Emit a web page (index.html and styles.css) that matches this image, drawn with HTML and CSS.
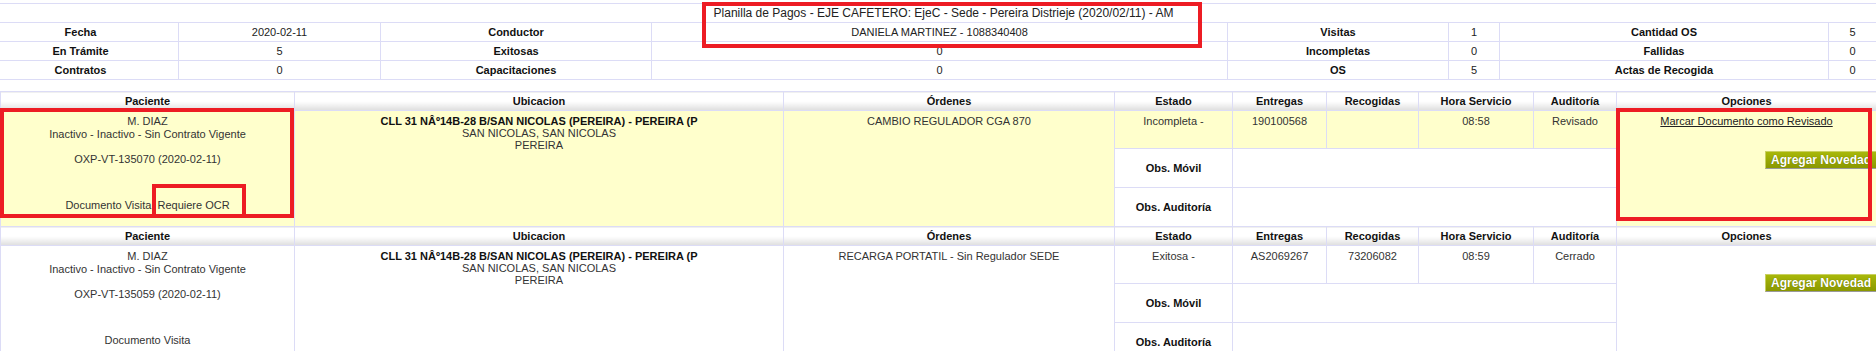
FILE: index.html
```html
<!DOCTYPE html>
<html>
<head>
  <meta charset="utf-8">
  <link rel="stylesheet" href="styles.css">
</head>
<body>
  <table class="resumen">
    <colgroup>
      <col style="width:196px"><col style="width:202px"><col style="width:271px"><col style="width:576px">
      <col style="width:221px"><col style="width:51px"><col style="width:329px"><col style="width:48px">
    </colgroup>
    <tr class="titulo">
      <td colspan="8">Planilla de Pagos - EJE CAFETERO: EjeC - Sede - Pereira Distrieje (2020/02/11) - AM</td>
    </tr>
    <tr>
      <th>Fecha</th><td>2020-02-11</td>
      <th>Conductor</th><td>DANIELA MARTINEZ - 1088340408</td>
      <th>Visitas</th><td>1</td>
      <th>Cantidad OS</th><td>5</td>
    </tr>
    <tr>
      <th>En Trámite</th><td>5</td>
      <th>Exitosas</th><td>0</td>
      <th>Incompletas</th><td>0</td>
      <th>Fallidas</th><td>0</td>
    </tr>
    <tr>
      <th>Contratos</th><td>0</td>
      <th>Capacitaciones</th><td>0</td>
      <th>OS</th><td>5</td>
      <th>Actas de Recogida</th><td>0</td>
    </tr>
  </table>

  <table class="visitas">
    <colgroup>
      <col style="width:294px"><col style="width:489px"><col style="width:331px"><col style="width:118px">
      <col style="width:94px"><col style="width:92px"><col style="width:115px"><col style="width:83px"><col style="width:260px">
    </colgroup>

    <tr class="cab">
      <th>Paciente</th><th>Ubicacion</th><th>Órdenes</th><th>Estado</th><th>Entregas</th>
      <th>Recogidas</th><th>Hora Servicio</th><th>Auditoría</th><th>Opciones</th>
    </tr>
    <tr class="fila1 pendiente">
      <td rowspan="3" class="paciente">
        M. DIAZ<br>Inactivo - Inactivo - Sin Contrato Vigente<br><br>OXP-VT-135070 (2020-02-11)
        <div class="doc">Documento Visita <span class="ocr">Requiere OCR</span></div>
      </td>
      <td rowspan="3" class="ubicacion"><b>CLL 31 NÂº14B-28 B/SAN NICOLAS (PEREIRA) - PEREIRA (P</b><br>SAN NICOLAS, SAN NICOLAS<br>PEREIRA</td>
      <td rowspan="3" class="ordenes">CAMBIO REGULADOR CGA 870</td>
      <td>Incompleta -</td>
      <td>190100568</td>
      <td></td>
      <td>08:58</td>
      <td>Revisado</td>
      <td rowspan="3" class="opciones">
        <a href="#">Marcar Documento como Revisado</a><br><br><br>
        <button class="btn-novedad">Agregar Novedad</button>
      </td>
    </tr>
    <tr class="obs">
      <th>Obs. Móvil</th><td colspan="4"></td>
    </tr>
    <tr class="obs">
      <th>Obs. Auditoría</th><td colspan="4"></td>
    </tr>

    <tr class="cab">
      <th>Paciente</th><th>Ubicacion</th><th>Órdenes</th><th>Estado</th><th>Entregas</th>
      <th>Recogidas</th><th>Hora Servicio</th><th>Auditoría</th><th>Opciones</th>
    </tr>
    <tr class="fila1">
      <td rowspan="3" class="paciente">
        M. DIAZ<br>Inactivo - Inactivo - Sin Contrato Vigente<br><br>OXP-VT-135059 (2020-02-11)
        <div class="doc">Documento Visita</div>
      </td>
      <td rowspan="3" class="ubicacion"><b>CLL 31 NÂº14B-28 B/SAN NICOLAS (PEREIRA) - PEREIRA (P</b><br>SAN NICOLAS, SAN NICOLAS<br>PEREIRA</td>
      <td rowspan="3" class="ordenes">RECARGA PORTATIL - Sin Regulador SEDE</td>
      <td>Exitosa -</td>
      <td>AS2069267</td>
      <td>73206082</td>
      <td>08:59</td>
      <td>Cerrado</td>
      <td rowspan="3" class="opciones">
        <br><br>
        <button class="btn-novedad">Agregar Novedad</button>
      </td>
    </tr>
    <tr class="obs">
      <th>Obs. Móvil</th><td colspan="4"></td>
    </tr>
    <tr class="obs">
      <th>Obs. Auditoría</th><td colspan="4"></td>
    </tr>
  </table>

  <!-- marcas rojas de revision -->
  <div class="marca marca-titulo"></div>
  <div class="marca marca-paciente"></div>
  <div class="marca marca-ocr"></div>
  <div class="marca marca-opciones"></div>
</body>
</html>
```

FILE: styles.css
```css
body {
  margin: 0;
  position: relative;
  font-family: "Liberation Sans", Arial, sans-serif;
  font-size: 11px;
  color: #222;
  background: #fff;
  overflow: hidden;
}

table {
  border-collapse: collapse;
  table-layout: fixed;
}

td, th {
  border: 1px solid #dcdcf6;
  padding: 0 2px;
  text-align: center;
  font-size: 11px;
}

th {
  font-weight: 700;
  color: #111;
}

.resumen {
  margin: 3px 0 0 -18px;
  width: calc(100% + 18px);
}

.resumen tr {
  height: 19px;
}

.resumen .titulo td {
  border-left: none;
  border-right: none;
  padding-left: 30px;
  font-size: 12px;
  color: #222;
}

.visitas {
  margin-top: 11px;
  width: 100%;
}

.visitas .cab {
  height: 19px;
}

.visitas .cab th {
  background: linear-gradient(#fff 0%, #fff 50%, #dedede 100%);
  color: #111;
}

.visitas .fila1 {
  height: 38px;
}

.visitas .obs {
  height: 39px;
}

.visitas .fila1 td {
  vertical-align: top;
  padding-top: 4px;
  color: #333;
}

.pendiente td {
  background: #ffffcc;
}

.paciente {
  line-height: 12.5px;
}

.doc {
  margin-top: 34px;
}

.ocr {
  margin-left: 3px;
}

.ubicacion b {
  color: #111;
}

.opciones {
  text-align: center;
}

.opciones a {
  color: #222;
  text-decoration: underline;
}

.btn-novedad {
  float: right;
  margin-right: -4px;
  height: 18px;
  padding: 0 6px 0 5px;
  border: 1px solid #9a9a9a;
  border-top-color: #c9d060;
  border-left-color: #c9d060;
  background: linear-gradient(#a8b80a, #8a9800);
  color: #fff;
  font-family: "Liberation Sans", Arial, sans-serif;
  font-size: 12px;
  font-weight: 700;
  text-shadow: 0 0 1px #5a6400;
  cursor: pointer;
}

.marca {
  position: absolute;
  border: 4px solid #ed1c24;
  box-sizing: border-box;
}

.marca-titulo {
  left: 702px;
  top: 2px;
  width: 500px;
  height: 46px;
}

.marca-paciente {
  left: 0;
  top: 108px;
  width: 294px;
  height: 110px;
}

.marca-ocr {
  left: 152px;
  top: 184px;
  width: 94px;
  height: 34px;
}

.marca-opciones {
  left: 1616px;
  top: 108px;
  width: 256px;
  height: 113px;
}
```
